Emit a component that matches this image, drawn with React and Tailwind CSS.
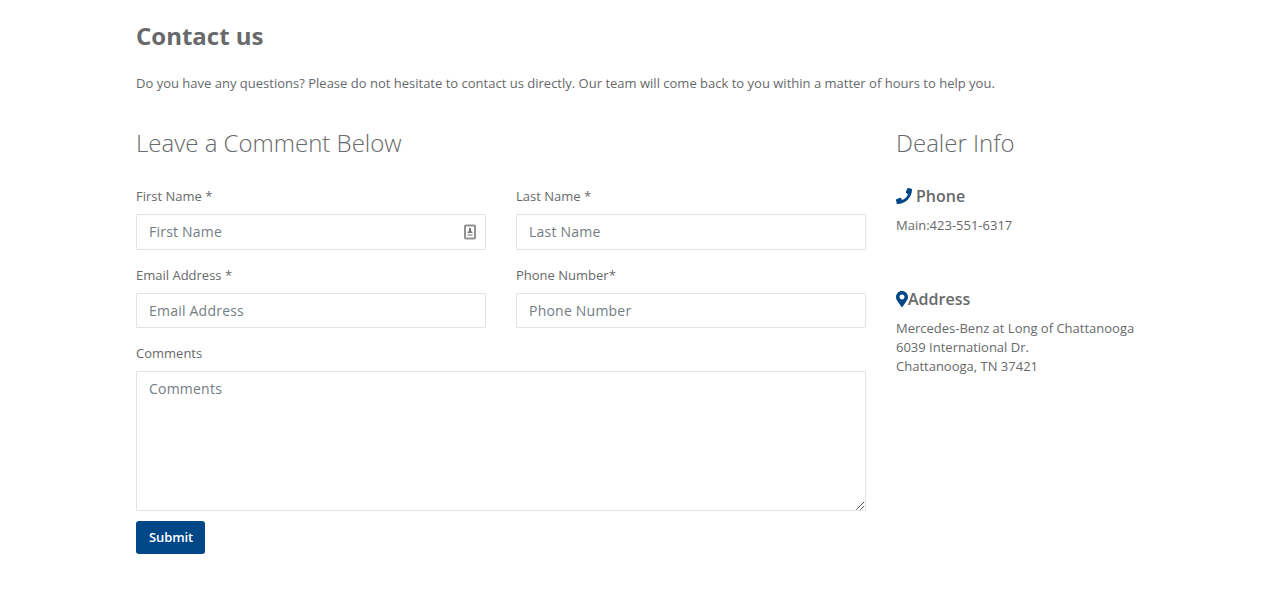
import { FaPhone, FaMapMarkerAlt } from "react-icons/fa";

function Field({ label, placeholder, badge, box }) {
  return (
    <label className="block w-[350px]">
      <span className="block h-[19px] leading-[19px]">{label}</span>
      <span className={"mt-2 flex items-center justify-between rounded-[1px] border border-[#e1e3e4] pl-3 pr-[9px] text-[14px] tracking-[0.22px] text-[#747d85] " + box}>
        <span>{placeholder}</span>
        {badge && (
          <svg width="12" height="16" viewBox="0 0 12 16" fill="none">
            <rect x="1" y="1.5" width="10" height="13" rx="0.8" stroke="#929292" strokeWidth="2" />
            <path d="M5 4h2v3l1.5 1v1h-5V8L5 7z" fill="#777" />
            <path d="M3.5 10h5v2h-5z" fill="#b5b5b5" />
          </svg>
        )}
      </span>
    </label>
  );
}

export default function App() {
  return (
    <main className="h-[592px] w-[1262px] overflow-hidden bg-white pl-[136px] font-['Open_Sans',sans-serif] text-[13px] leading-[19px] text-[#67696b]">
      <h1 className="pt-[20px] text-[24px] leading-[32px] font-bold">Contact us</h1>
      <p className="mt-[22px] tracking-[0.005px]">Do you have any questions? Please do not hesitate to contact us directly. Our team will come back to you within a matter of hours to help you.</p>
      <div className="mt-[34px] flex gap-[30px]">
        <section className="w-[730px]">
          <h2 className="text-[24px] leading-[32px] font-light">Leave a Comment Below</h2>
          <div className="mt-[28px] flex gap-[30px]">
            <Field label="First Name *" placeholder="First Name" badge box="h-9 pb-px" />
            <Field label="Last Name *" placeholder="Last Name" box="h-9 pb-px" />
          </div>
          <div className="mt-4 flex gap-[30px]">
            <Field label="Email Address *" placeholder="Email Address" box="h-[35px]" />
            <Field label="Phone Number*" placeholder="Phone Number" box="h-[35px]" />
          </div>
          <label className="relative mt-4 block">
            <span className="block">Comments</span>
            <textarea placeholder="Comments" className="mt-2 block h-[140px] w-full resize-none rounded-[1px] border border-[#e1e3e4] px-3 py-[6px] text-[14px] leading-[21px] tracking-[0.22px] placeholder:text-[#747d85]" />
            <svg width="9" height="9" viewBox="0 0 9 9" className="pointer-events-none absolute right-[1px] bottom-[1px]" stroke="#555" strokeWidth="1">
              <path d="M0.3 8.7L8.2 0.8M4.3 8.7L8.2 4.8" />
            </svg>
          </label>
          <button className="mt-[10px] h-[33px] w-[69px] rounded-[3px] bg-[#004788] pl-px font-semibold tracking-[-0.15px] text-white">Submit</button>
        </section>
        <aside>
          <h2 className="text-[24px] leading-[32px] font-light">Dealer Info</h2>
          <h3 className="mt-[27px] flex items-center gap-1 text-[16px] leading-[20px] font-semibold"><FaPhone className="size-4 text-[#004788]" />Phone</h3>
          <p className="mt-[10px]">Main:423-551-6317</p>
          <h3 className="mt-[54px] flex items-center text-[16px] leading-[20px] font-semibold"><FaMapMarkerAlt className="h-4 w-3 text-[#004788]" />Address</h3>
          <p className="mt-[10px]">Mercedes-Benz at Long of Chattanooga<br />6039 International Dr.<br />Chattanooga, TN 37421</p>
        </aside>
      </div>
    </main>
  );
}
